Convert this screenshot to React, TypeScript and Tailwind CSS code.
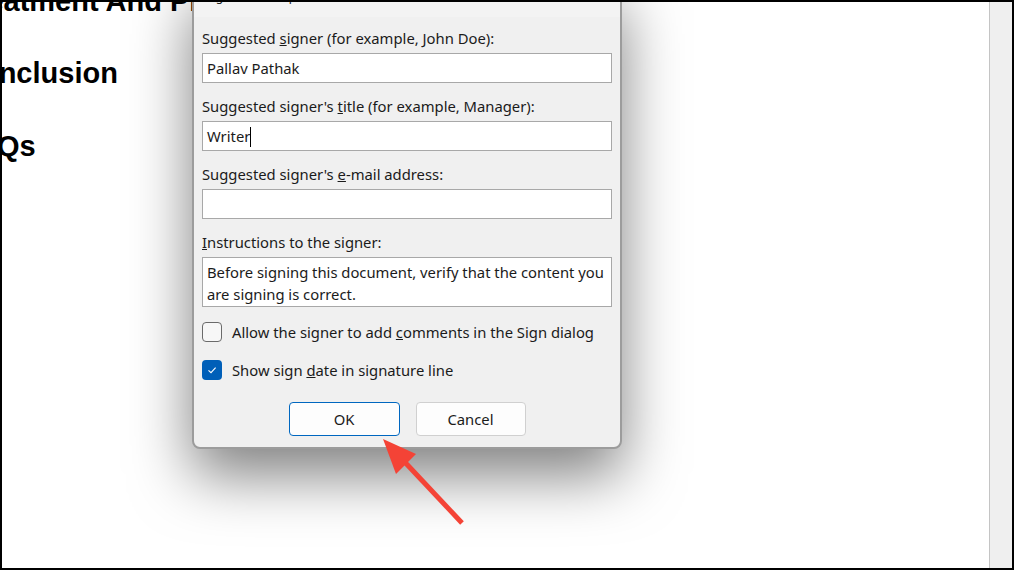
import React from "react";

type FieldProps = {
  label: React.ReactNode;
  value?: string;
  caret?: boolean;
  multiline?: boolean;
};

function Field({ label, value, caret, multiline }: FieldProps) {
  return (
    <div className="flex flex-col gap-[5px]">
      <div className="h-5 leading-5">{label}</div>
      <div
        className={`bg-white border border-[#a8a8a8] px-[4px] ${
          multiline ? "h-[50px] pt-[3px] leading-[22px]" : "h-[30px] leading-[28px]"
        }`}
      >
        {value}
        {caret && <span className="inline-block w-px h-[20px] bg-black align-middle -mt-[2px]" />}
      </div>
    </div>
  );
}

function Check({ checked, children }: { checked?: boolean; children: React.ReactNode }) {
  return (
    <div className="flex items-center gap-[10px] h-5">
      {checked ? (
        <div className="w-5 h-5 rounded-[4px] bg-[#005fb8] flex items-center justify-center">
          <svg width="12" height="12" viewBox="0 0 12 12" fill="none">
            <path d="M2.5 6.3 L5 8.6 L9.6 3.6" stroke="white" strokeWidth="1.1" />
          </svg>
        </div>
      ) : (
        <div className="w-5 h-5 rounded-[4px] border border-[#6a6a6a] bg-[#f7f7f7]" />
      )}
      <span className="leading-5">{children}</span>
    </div>
  );
}

export default function App() {
  return (
    <div className="relative w-[1014px] h-[570px] overflow-hidden bg-white border-2 border-black">
      <div className="flex h-full">
        {/* document page */}
        <div
          className="flex-1 flex flex-col -ml-[42px] text-[29px] font-bold text-black"
          style={{ fontFamily: '"Liberation Sans", Arial, sans-serif' }}
        >
          <div className="h-[73px] leading-[34px] -mt-[18px] whitespace-nowrap">Treatment And Prevention</div>
          <div className="h-[73px] leading-[34px] -mt-[1px] whitespace-nowrap">Conclusion</div>
          <div className="h-[73px] leading-[34px] whitespace-nowrap">FAQs</div>
        </div>
        {/* scrollbar */}
        <div className="w-[23px] h-full bg-[#efefef] border-l border-[#c4c4c4]" />
      </div>

      {/* dialog */}
      <div
        className="absolute left-[190px] top-[-22px] w-[430px] bg-[#f0f0f0] border-2 border-[#9c9c9c] rounded-b-[8px] shadow-[0_26px_60px_rgba(0,0,0,0.5)] text-[14.8px] text-[#1b1b1b]"
        style={{ fontFamily: '"Noto Sans", "Open Sans", sans-serif' }}
      >
        <div className="h-[35px] bg-[#f3f3f3] pl-[12px] pt-[7px] text-[12px] leading-4 text-[#222]">
          Signature Setup
        </div>
        <div className="px-[8px] pt-[11px] pb-[11px] flex flex-col">
          <div className="flex flex-col gap-[13px]">
            <Field
              label={
                <>
                  Suggested <u>s</u>igner (for example, John Doe):
                </>
              }
              value="Pallav Pathak"
            />
            <Field
              label={
                <>
                  Suggested signer's <u>t</u>itle (for example, Manager):
                </>
              }
              value="Writer"
              caret
            />
            <Field
              label={
                <>
                  Suggested signer's <u>e</u>-mail address:
                </>
              }
            />
            <Field
              label={
                <>
                  <u>I</u>nstructions to the signer:
                </>
              }
              value="Before signing this document, verify that the content you are signing is correct."
              multiline
            />
          </div>
          <div className="flex flex-col gap-[18px] mt-[15px]">
            <Check>
              Allow the signer to add <u>c</u>omments in the Sign dialog
            </Check>
            <Check checked>
              Show sign <u>d</u>ate in signature line
            </Check>
          </div>
          <div className="flex justify-center gap-[16px] mt-[22px]">
            <button className="w-[111px] h-[34px] bg-[#fdfdfd] border border-[#0067c0] rounded-[4px] text-[14.8px]">
              OK
            </button>
            <button className="w-[110px] h-[34px] bg-[#fdfdfd] border border-[#d0d0d0] rounded-[4px] text-[14.8px]">
              Cancel
            </button>
          </div>
        </div>
      </div>

      {/* annotation arrow */}
      <svg className="absolute left-0 top-0 pointer-events-none" width="1014" height="570">
        <line x1="460" y1="521" x2="398" y2="455" stroke="#f44336" strokeWidth="5" strokeLinecap="butt" />
        <polygon points="381,437 414,452 394,472" fill="#f44336" />
      </svg>
    </div>
  );
}
